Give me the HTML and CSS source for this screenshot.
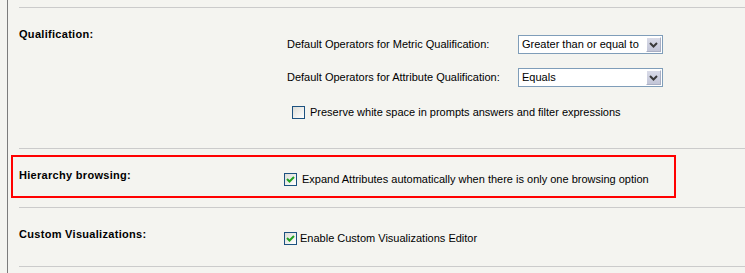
FILE: index.html
```html
<!DOCTYPE html>
<html lang="en">
<head>
    <meta charset="UTF-8">
    <title>Preferences</title>
    <link rel="stylesheet" href="styles.css">
</head>
<body>

    <div class="panel">

        <div class="section">
            <div class="section-title">Qualification:</div>
            <div class="section-body qual-body">
                <div class="row">
                    <span class="row-label">Default Operators for Metric Qualification:</span>
                    <div class="select">
                        <span class="select-text">Greater than or equal to</span>
                        <span class="select-btn">
                            <svg width="9" height="6" viewBox="0 0 9 6"><polyline points="1,1 4.5,4.5 8,1" fill="none" stroke="#3a3a3a" stroke-width="2"/></svg>
                        </span>
                    </div>
                </div>
                <div class="row">
                    <span class="row-label">Default Operators for Attribute Qualification:</span>
                    <div class="select">
                        <span class="select-text">Equals</span>
                        <span class="select-btn">
                            <svg width="9" height="6" viewBox="0 0 9 6"><polyline points="1,1 4.5,4.5 8,1" fill="none" stroke="#3a3a3a" stroke-width="2"/></svg>
                        </span>
                    </div>
                </div>
                <label class="check-row indent">
                    <span class="check"></span>
                    <span class="check-text">Preserve white space in prompts answers and filter expressions</span>
                </label>
            </div>
        </div>

        <div class="section highlighted">
            <div class="section-title">Hierarchy browsing:</div>
            <div class="section-body short-body">
                <label class="check-row">
                    <span class="check checked">
                        <svg width="11" height="11" viewBox="0 0 11 11"><polyline points="2,5 4.5,7.5 9,3" fill="none" stroke="#21a121" stroke-width="2"/></svg>
                    </span>
                    <span class="check-text">Expand Attributes automatically when there is only one browsing option</span>
                </label>
            </div>
            <div class="highlight-box"></div>
        </div>

        <div class="section">
            <div class="section-title">Custom Visualizations:</div>
            <div class="section-body short-body">
                <label class="check-row tight">
                    <span class="check checked">
                        <svg width="11" height="11" viewBox="0 0 11 11"><polyline points="2,5 4.5,7.5 9,3" fill="none" stroke="#21a121" stroke-width="2"/></svg>
                    </span>
                    <span class="check-text">Enable Custom Visualizations Editor</span>
                </label>
            </div>
        </div>

        <div class="section"></div>

    </div>

</body>
</html>
```

FILE: styles.css
```css
body {
    margin: 0;
    padding: 0;
    background: #f4f4f0;
    font-family: 'Liberation Sans', Arial, sans-serif;
    font-size: 11px;
    line-height: 13px;
    color: #000;
    height: 273px;
    overflow: hidden;
}

.panel {
    margin-left: 7px;
    padding-top: 7px;
    padding-left: 11px;
    border-left: 1px solid #7c7c7c;
    height: 273px;
}

.section {
    position: relative;
    display: grid;
    grid-template-columns: 265px 1fr;
    border-top: 1px solid #cbcbcb;
}

.section-title {
    font-weight: bold;
    letter-spacing: 0.3px;
    padding-top: 20px;
}

.qual-body {
    padding: 27px 0 29px;
    display: flex;
    flex-direction: column;
}

.short-body {
    padding: 24px 0 21px;
}

.row {
    display: flex;
    align-items: center;
    height: 19px;
    margin-bottom: 14px;
}

.row + .check-row {
    margin-top: 5px;
}

.row-label {
    width: 231px;
    padding-left: 3px;
}

.select {
    display: flex;
    align-items: center;
    width: 145px;
    height: 19px;
    box-sizing: border-box;
    border: 1px solid #7f9db9;
    background: #fff;
}

.select-text {
    flex: 1;
    padding-left: 3px;
    white-space: nowrap;
    overflow: hidden;
}

.select-btn {
    display: flex;
    align-items: center;
    justify-content: center;
    width: 15px;
    height: 15px;
    margin-right: 1px;
    box-sizing: border-box;
    border: 1px solid #fff;
    border-right-color: #a9afc4;
    border-bottom-color: #a9afc4;
    background: linear-gradient(#d9dbe8, #c2c5d7);
}

.check-row {
    display: flex;
    align-items: center;
    gap: 5px;
    height: 13px;
}

.check-row.indent {
    margin-left: 8px;
}

.check-row.tight {
    gap: 3px;
}

.check {
    display: flex;
    align-items: center;
    justify-content: center;
    width: 13px;
    height: 13px;
    box-sizing: border-box;
    border: 1px solid #1c5180;
    background: linear-gradient(135deg, #dcdcd7, #ffffff);
}

.check-text {
    white-space: nowrap;
}

.highlight-box {
    position: absolute;
    top: 6px;
    left: -8px;
    width: 665px;
    height: 43px;
    box-sizing: border-box;
    border: 2px solid #ff0000;
}
```
